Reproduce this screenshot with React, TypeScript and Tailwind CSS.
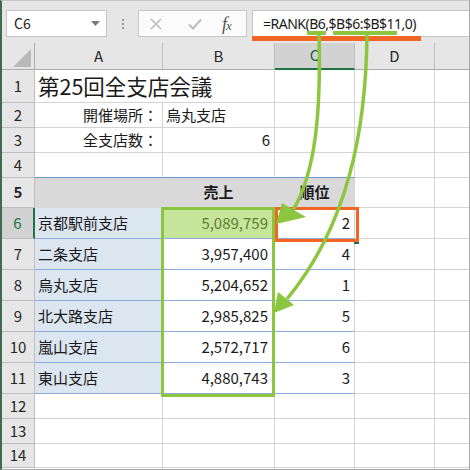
import React from 'react';

type CellProps = { w: string; className?: string; children?: React.ReactNode };

const Cell = ({ w, className = '', children }: CellProps) => (
  <div className={`${w} shrink-0 h-full border-r border-b flex items-center overflow-hidden whitespace-nowrap ${className}`}>
    {children}
  </div>
);

const RowHead = ({ n, selected }: { n: number; selected?: boolean }) => (
  <div
    className={`w-[33px] shrink-0 h-full border-b flex items-center justify-center text-[15px] ${
      selected
        ? 'bg-[#d2d2d2] text-[#217346] border-r-2 border-r-[#217346] border-b-[#bebebe]'
        : 'bg-[#e6e6e6] text-[#262626] border-r border-[#bebebe]'
    }`}
  >
    {n}
  </div>
);

const branches = [
  { name: '京都駅前支店', sales: '5,089,759', rank: 2 },
  { name: '二条支店', sales: '3,957,400', rank: 4 },
  { name: '烏丸支店', sales: '5,204,652', rank: 1 },
  { name: '北大路支店', sales: '2,985,825', rank: 5 },
  { name: '嵐山支店', sales: '2,572,717', rank: 6 },
  { name: '東山支店', sales: '4,880,743', rank: 3 },
];

const G = 'border-[#d4d4d4]';
const A = 'w-[128px]';
const B = 'w-[112px]';
const C = 'w-[80px]';
const D = 'w-[80px]';
const E = 'flex-1 min-w-0';

export default function App() {
  return (
    <div className="w-[470px] h-[470px] relative overflow-hidden bg-white border-l-2 border-l-[#3d6b50] border-t border-t-[#c8c8c8] border-r border-r-[#a8a8a8] border-b border-b-[#a8a8a8] font-['Noto_Sans_CJK_JP',sans-serif] text-[#1a1a1a]">
      {/* formula bar */}
      <div className="h-[42px] bg-[#e6e6e6] flex items-start pt-[9px] pl-[4px]">
        <div className="w-[101px] h-[27px] bg-white border border-[#c6c6c6] flex items-center justify-between pl-[7px] pr-[6px]">
          <span className="text-[14px] text-[#222]">C6</span>
          <svg width="9" height="5" viewBox="0 0 9 5">
            <path d="M0 0 L9 0 L4.5 5 Z" fill="#7a7a7a" />
          </svg>
        </div>
        <div className="w-[31px] h-[27px] flex flex-col items-center justify-center gap-[2px]">
          <span className="w-[2px] h-[2px] bg-[#9a9a9a]" />
          <span className="w-[2px] h-[2px] bg-[#9a9a9a]" />
          <span className="w-[2px] h-[2px] bg-[#9a9a9a]" />
        </div>
        <div className="w-[109px] h-[27px] bg-[#fbfbfb] border border-[#c6c6c6] flex items-center">
          <svg className="ml-[11px]" width="12" height="12" viewBox="0 0 12 12">
            <path d="M1 1 L11 11 M11 1 L1 11" stroke="#bdbdbd" strokeWidth="1.6" />
          </svg>
          <svg className="ml-[26px]" width="14" height="12" viewBox="0 0 14 12">
            <path d="M1 6.5 L5 10.5 L13 1.5" stroke="#bdbdbd" strokeWidth="2" fill="none" />
          </svg>
          <span className="ml-[20px] text-[18px] leading-none italic text-[#555] font-['Liberation_Serif',serif] tracking-[-1px]">
            f<span className="text-[13px]">x</span>
          </span>
        </div>
        <div className="ml-[5px] flex-1 h-[27px] bg-white border border-r-0 border-[#c6c6c6] flex items-center pl-[10px]">
          <span className="text-[14px] text-[#1a1a1a] font-['Noto_Sans',sans-serif] tracking-[-0.5px]">=RANK(B6,$B$6:$B$11,0)</span>
        </div>
      </div>

      {/* column headers */}
      <div className="h-[27px] flex text-[15px] text-[#262626]">
        <div className="w-[33px] shrink-0 h-full bg-[#e6e6e6] border-r border-b border-[#ababab] relative">
          <svg className="absolute right-[3px] bottom-[2px]" width="18" height="18" viewBox="0 0 18 18">
            <path d="M18 0 L18 18 L0 18 Z" fill="#b9b9b9" />
          </svg>
        </div>
        <div className={`${A} shrink-0 h-full bg-[#e6e6e6] border-r border-[#bebebe] border-b border-b-[#ababab] flex items-center justify-center`}>A</div>
        <div className={`${B} shrink-0 h-full bg-[#e6e6e6] border-r border-[#bebebe] border-b border-b-[#ababab] flex items-center justify-center`}>B</div>
        <div className={`${C} shrink-0 h-full bg-[#d2d2d2] border-r border-[#bebebe] border-b-2 border-b-[#217346] flex items-center justify-center text-[#1e5e3a]`}>C</div>
        <div className={`${D} shrink-0 h-full bg-[#e6e6e6] border-r border-[#bebebe] border-b border-b-[#ababab] flex items-center justify-center`}>D</div>
        <div className={`${E} h-full bg-[#e6e6e6] border-b border-[#ababab]`} />
      </div>

      {/* row 1 */}
      <div className="h-[33px] flex">
        <RowHead n={1} />
        <Cell w={A} className={`${G} border-r-0 overflow-visible`}>
          <span className="pl-[3px] text-[21.5px] leading-none">第25回全支店会議</span>
        </Cell>
        <Cell w={B} className={G} />
        <Cell w={C} className={G} />
        <Cell w={D} className={G} />
        <Cell w={E} className={`${G} border-r-0`} />
      </div>

      {/* row 2 */}
      <div className="h-[25px] flex text-[15px]">
        <RowHead n={2} />
        <Cell w={A} className={`${G} justify-end pr-[4px]`}>開催場所：</Cell>
        <Cell w={B} className={`${G} pl-[3px]`}>烏丸支店</Cell>
        <Cell w={C} className={G} />
        <Cell w={D} className={G} />
        <Cell w={E} className={`${G} border-r-0`} />
      </div>

      {/* row 3 */}
      <div className="h-[25px] flex text-[15px]">
        <RowHead n={3} />
        <Cell w={A} className={`${G} justify-end pr-[4px]`}>全支店数：</Cell>
        <Cell w={B} className={`${G} justify-end pr-[4px]`}>6</Cell>
        <Cell w={C} className={G} />
        <Cell w={D} className={G} />
        <Cell w={E} className={`${G} border-r-0`} />
      </div>

      {/* row 4 */}
      <div className="h-[25px] flex text-[15px]">
        <RowHead n={4} />
        <Cell w={A} className={`${G} border-b-[#6f96c8]`} />
        <Cell w={B} className={`${G} border-b-[#6f96c8]`} />
        <Cell w={C} className={`${G} border-b-[#6f96c8]`} />
        <Cell w={D} className={G} />
        <Cell w={E} className={`${G} border-r-0`} />
      </div>

      {/* row 5 */}
      <div className="h-[30px] flex text-[15px] font-bold">
        <RowHead n={5} />
        <Cell w={A} className="bg-[#d9d9d9] border-[#d9d9d9]" />
        <Cell w={B} className="bg-[#d9d9d9] border-[#d9d9d9] justify-center">売上</Cell>
        <Cell w={C} className="bg-[#d9d9d9] border-b-[#d9d9d9] border-r-[#d4d4d4] justify-center">順位</Cell>
        <Cell w={D} className={G} />
        <Cell w={E} className={`${G} border-r-0`} />
      </div>

      {/* rows 6-11 */}
      {branches.map((b, i) => (
        <div key={b.name} className="h-[31px] flex text-[15px]">
          <RowHead n={6 + i} selected={i === 0} />
          <Cell w={A} className="bg-[#dce6f1] border-[#8eaadb] pl-[3px]">{b.name}</Cell>
          <Cell
            w={B}
            className={`border-[#8eaadb] justify-end pr-[6px] ${i === 0 ? 'bg-[#c5e59b] text-[#5f7f2c]' : ''}`}
          >
            {b.sales}
          </Cell>
          <Cell w={C} className="border-b-[#8eaadb] border-r-[#d4d4d4] justify-end pr-[4px]">{b.rank}</Cell>
          <Cell w={D} className={G} />
          <Cell w={E} className={`${G} border-r-0`} />
        </div>
      ))}

      {/* rows 12-14 */}
      {[12, 13, 14].map((n) => (
        <div key={n} className={`${n === 14 ? 'h-[24px]' : 'h-[25px]'} flex text-[15px]`}>
          <RowHead n={n} />
          <Cell w={A} className={G} />
          <Cell w={B} className={G} />
          <Cell w={C} className={G} />
          <Cell w={D} className={G} />
          <Cell w={E} className={`${G} border-r-0`} />
        </div>
      ))}

      {/* highlights */}
      <div className="absolute left-[159px] top-[206px] w-[114px] h-[190px] border-[3px] border-[#8cc63e]" />
      <div className="absolute left-[352px] top-[238px] w-[5px] h-[5px] bg-[#217346]" />
      <div className="absolute left-[273px] top-[206px] w-[84px] h-[35px] border-[3px] border-[#f26522]" />
      <div className="absolute left-[250px] top-[35px] w-[169px] h-[5px] bg-[#f26522]" />
      <div className="absolute left-[305px] top-[30px] w-[19px] h-[4px] bg-[#8cc63e]" />
      <div className="absolute left-[331px] top-[30px] w-[64px] h-[4px] bg-[#8cc63e]" />

      {/* arrows */}
      <svg className="absolute -left-[2px] -top-[1px] pointer-events-none" width="470" height="470" viewBox="0 0 470 470">
        <path d="M319 35 C321 110 316 172 293 210" stroke="#8cc63e" strokeWidth="3.5" fill="none" />
        <polygon points="276,224 282,203 306,217" fill="#8cc63e" />
        <path d="M367 35 C366 130 348 225 287 299" stroke="#8cc63e" strokeWidth="3.5" fill="none" />
        <polygon points="274,313 278,292 294,305" fill="#8cc63e" />
      </svg>
    </div>
  );
}
